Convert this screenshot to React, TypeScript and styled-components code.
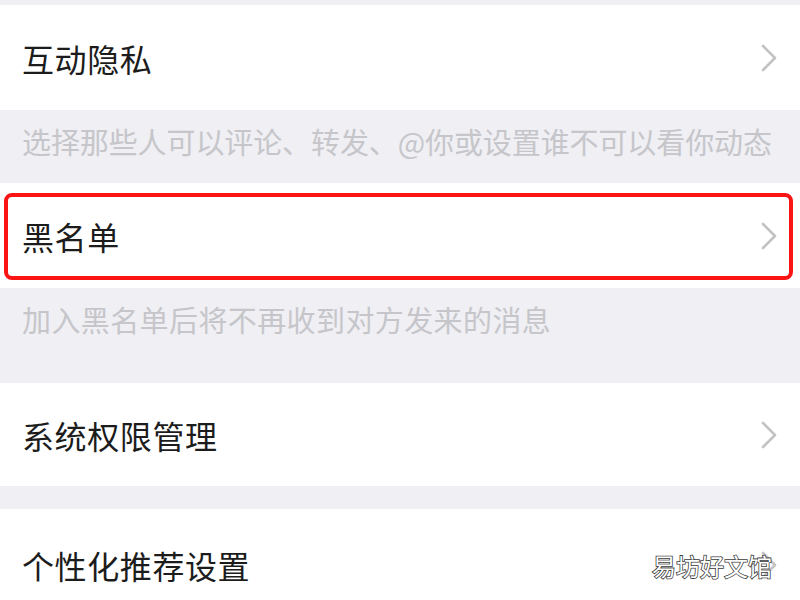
import styled, { createGlobalStyle } from "styled-components";

const GlobalStyle = createGlobalStyle`
  html, body {
    margin: 0;
    padding: 0;
    background: #efeff4;
    font-family: "Noto Sans CJK SC", "Noto Sans", sans-serif;
  }
`;

const Page = styled.div`
  position: relative;
  width: 800px;
  height: 600px;
  overflow: hidden;
  display: flex;
  flex-direction: column;
  background: #efeff4;
  padding-top: 5px;
  box-sizing: border-box;
`;

const Row = styled.div<{ $height: number }>`
  position: relative;
  flex: none;
  height: ${(p) => p.$height}px;
  background: #fff;
  display: flex;
  align-items: center;
  justify-content: space-between;
  padding: 0 22px 0 22px;
`;

const Title = styled.span`
  font-size: 32px;
  color: #1c1c1c;
  letter-spacing: 0.6px;
`;

const Caption = styled.div<{ $height: number; $spacing?: number }>`
  flex: none;
  height: ${(p) => p.$height}px;
  display: flex;
  align-items: flex-start;
  padding: 10px 22px 0;
  box-sizing: border-box;
  font-size: 29px;
  color: #c6c6ca;
  letter-spacing: ${(p) => p.$spacing ?? 0.4}px;
  white-space: nowrap;
`;

const Gap = styled.div<{ $height: number }>`
  flex: none;
  height: ${(p) => p.$height}px;
`;

const Highlight = styled.div`
  position: absolute;
  left: 4px;
  right: 7px;
  top: 10px;
  bottom: 8px;
  border: 4px solid #fa1414;
  border-radius: 8px;
  pointer-events: none;
`;

const Watermark = styled.div`
  position: absolute;
  right: 28px;
  bottom: 17px;
  font-size: 24px;
  color: #fff;
  -webkit-text-stroke: 1.6px #3a3a3a;
  paint-order: stroke fill;
`;

const Chevron = () => (
  <svg width="18" height="30" viewBox="0 0 18 30" fill="none">
    <path d="M3 3 L15 15 L3 27" stroke="#c3c3c6" strokeWidth="2.6" strokeLinecap="round" strokeLinejoin="round" />
  </svg>
);

export default function App() {
  return (
    <>
      <GlobalStyle />
      <Page>
        <Row $height={105}>
          <Title>互动隐私</Title>
          <Chevron />
        </Row>
        <Caption $height={73} $spacing={-0.1}>
          选择那些人可以评论、转发、@你或设置谁不可以看你动态
        </Caption>
        <Row $height={105}>
          <Title>黑名单</Title>
          <Chevron />
          <Highlight />
        </Row>
        <Caption $height={95}>加入黑名单后将不再收到对方发来的消息</Caption>
        <Row $height={103}>
          <Title>系统权限管理</Title>
          <Chevron />
        </Row>
        <Gap $height={23} />
        <Row $height={112}>
          <Title>个性化推荐设置</Title>
          <Chevron />
        </Row>
        <Watermark>易坊好文馆</Watermark>
      </Page>
    </>
  );
}
